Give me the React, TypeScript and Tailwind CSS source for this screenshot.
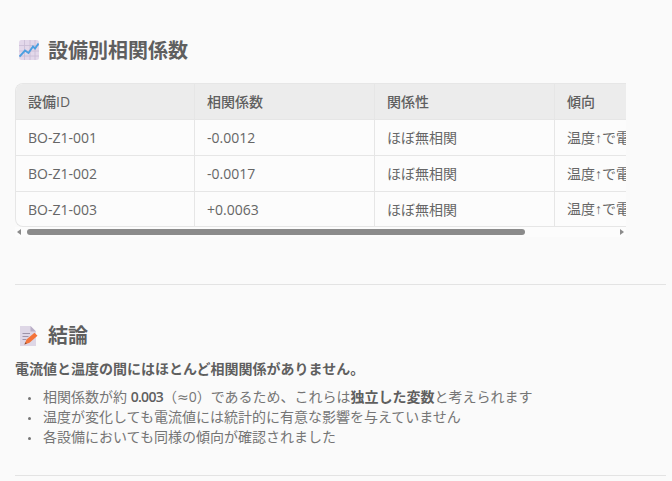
const font = { fontFamily: '"Open Sans", "Noto Sans CJK JP", sans-serif' };

function ChartIcon() {
  return (
    <svg width="20" height="20" viewBox="0 0 20 20" className="shrink-0 mb-[2px]">
      <rect x="0" y="0" width="20" height="20" rx="2.5" fill="#e3d8ea" />
      <path d="M0 5.5H20M0 11H20M0 16H20M5.5 0V20M11 0V20M16 0V20" stroke="#c9bcd4" strokeWidth="0.8" />
      <path d="M0.5 16.5L6 10.5L9.5 13L14 6.5L16 8.5L19.5 3.5" fill="none" stroke="#4b9fe0" strokeWidth="1.9" />
    </svg>
  );
}

function MemoIcon() {
  return (
    <svg width="20" height="20" viewBox="0 0 20 20" className="shrink-0">
      <path d="M1 0H11.5L17 5.5V20H1Z" fill="#ded7e6" />
      <path d="M11.5 0L17 5.5H11.5Z" fill="#b9aec6" />
      <path d="M3.5 7.5H11M3.5 10.5H9.5M3.5 13.5H7" stroke="#9d93a8" strokeWidth="1.1" />
      <path d="M5.5 18.5L7.5 13.5L15.5 6.8L18.5 9.8L10.5 16.8Z" fill="#f4743a" />
      <path d="M5.5 18.5L6.4 16.3L7.8 17.6Z" fill="#7a4a35" />
    </svg>
  );
}

const rows = [
  ["BO-Z1-001", "-0.0012", "h-9"],
  ["BO-Z1-002", "-0.0017", "h-9"],
  ["BO-Z1-003", "+0.0063", "h-[35px]"],
];
const th = "h-[35px] pl-[12px] pr-[13px] border-r border-[#e6e6e6] text-left font-medium text-[14px] text-[#5f5f5f] whitespace-nowrap overflow-hidden";
const td = "pl-[12px] pr-[13px] border-r border-t border-[#e6e6e6] text-left font-normal text-[14px] text-[#666666] whitespace-nowrap overflow-hidden";
const li = "relative before:absolute before:left-[-15px] before:top-[10px] before:w-[3px] before:h-[3px] before:rounded-full before:bg-[#757575]";

export default function App() {
  return (
    <div style={font} className="w-[672px] h-[481px] overflow-hidden bg-[#fafafa] pt-[37px] pl-[15px] pr-[6px] text-[#5f5f5f] antialiased">
      <h2 className="flex items-center h-[28px] pl-[4px] gap-[9px] text-[20px] leading-[28px] font-bold text-[#5f5f5f]">
        <ChartIcon />
        <span>設備別相関係数</span>
      </h2>
      <div className="mt-[18px] w-[611px]">
        <div className="overflow-hidden rounded-l-[8px] border-l border-t border-b border-[#e6e6e6] bg-[#fcfcfc]">
          <table className="table-fixed border-separate border-spacing-0 w-[900px]">
            <colgroup>
              <col className="w-[179px]" />
              <col className="w-[180px]" />
              <col className="w-[180px]" />
              <col className="w-[361px]" />
            </colgroup>
            <thead>
              <tr className="bg-[#ececec]">
                <th className={th}>設備ID</th>
                <th className={th}>相関係数</th>
                <th className={th}>関係性</th>
                <th className={th}>傾向</th>
              </tr>
            </thead>
            <tbody>
              {rows.map(([id, v, h]) => (
                <tr key={id} className={h}>
                  <td className={td}>{id}</td>
                  <td className={td}>{v}</td>
                  <td className={td}>ほぼ無相関</td>
                  <td className={td}>温度<span className="font-['Liberation_Sans']">↑</span>で電流値がほぼ変化なし</td>
                </tr>
              ))}
            </tbody>
          </table>
        </div>
        <div className="flex items-center h-[10px] bg-[#fcfcfc]">
          <div className="ml-[2px] w-0 h-0 border-y-[3px] border-y-transparent border-r-[4px] border-r-[#8b8b8b]" />
          <div className="ml-[6px] w-[498px] h-[6px] rounded-full bg-[#8b8b8b]" />
          <div className="ml-auto mr-[2px] w-0 h-0 border-y-[3px] border-y-transparent border-l-[4px] border-l-[#8b8b8b]" />
        </div>
      </div>
      <hr className="mt-[47px] border-0 border-t border-[#e3e3e3]" />
      <h2 className="mt-[37px] flex items-center h-[28px] pl-[4px] gap-[9px] text-[20px] leading-[28px] font-bold text-[#5f5f5f]">
        <MemoIcon />
        <span>結論</span>
      </h2>
      <p className="mt-[9px] text-[14px] leading-[20px] font-semibold text-[#5f5f5f]">
        電流値と温度の間にはほとんど相関関係がありません。
      </p>
      <ul className="mt-[8px] pl-[28px] list-none text-[14px] leading-[20px] text-[#757575]">
        <li className={li}>相関係数が約 <strong className="font-semibold text-[#5f5f5f] tracking-[-0.7px]">0.003</strong>（<span className="font-['DejaVu_Sans']">≈</span>0）であるため、これらは<strong className="font-semibold text-[#5f5f5f]">独立した変数</strong>と考えられます</li>
        <li className={li}>温度が変化しても電流値には統計的に有意な影響を与えていません</li>
        <li className={li}>各設備においても同様の傾向が確認されました</li>
      </ul>
      <hr className="mt-[28px] border-0 border-t border-[#e3e3e3]" />
    </div>
  );
}
